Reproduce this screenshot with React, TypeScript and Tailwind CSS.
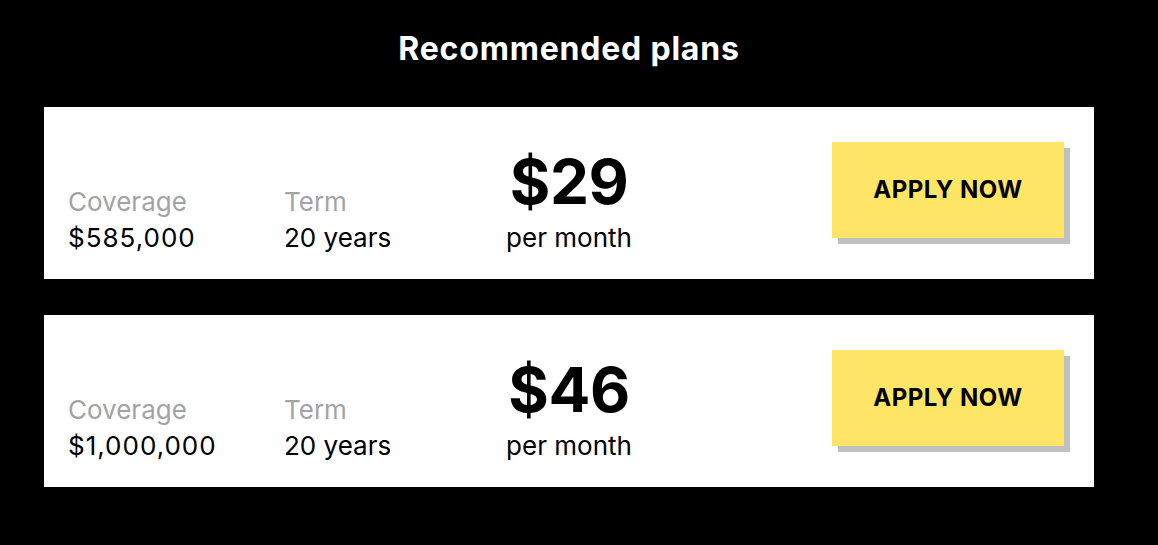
import React from 'react';

interface Plan {
  coverage: string;
  term: string;
  price: string;
}

const plans: Plan[] = [
  { coverage: '$585,000', term: '20 years', price: '$29' },
  { coverage: '$1,000,000', term: '20 years', price: '$46' },
];

const PlanCard: React.FC<{ plan: Plan }> = ({ plan }) => (
  <div className="flex h-[172px] items-end bg-white px-6 pb-[23px]">
    {/* Details */}
    <div className="flex flex-1 text-[26px] leading-[36px]">
      <div className="w-[216px]">
        <div className="text-[#a3a3a3]">Coverage</div>
        <div className="tracking-[1px] text-black">{plan.coverage}</div>
      </div>
      <div>
        <div className="text-[#a3a3a3]">Term</div>
        <div className="text-black">{plan.term}</div>
      </div>
    </div>

    {/* Price */}
    <div className="flex flex-col items-center">
      <div className="text-[62px] font-bold leading-none tracking-[-0.5px] text-black">{plan.price}</div>
      <div className="mt-[7px] text-[26px] leading-[36px] text-black">per month</div>
    </div>

    {/* Action */}
    <div className="flex flex-1 justify-end self-start pt-[35px]">
      <button className="mr-[6px] flex h-[96px] w-[232px] items-center justify-center bg-[#ffe566] text-[24px] font-bold tracking-[0.5px] text-black shadow-[6px_6px_0_#c0c0c0]">
        APPLY NOW
      </button>
    </div>
  </div>
);

export default function App() {
  return (
    <div
      className="min-h-[545px] w-full bg-black pt-[31px]"
      style={{ fontFamily: 'Inter, "Liberation Sans", sans-serif' }}
    >
      <div className="ml-[44px] w-[1050px]">
        <h1 className="mb-10 text-center text-[32px] font-bold leading-[36px] tracking-[0.8px] text-white">
          Recommended plans
        </h1>
        <div className="flex flex-col gap-[36px]">
          {plans.map((p) => (
            <PlanCard key={p.price} plan={p} />
          ))}
        </div>
      </div>
    </div>
  );
}
